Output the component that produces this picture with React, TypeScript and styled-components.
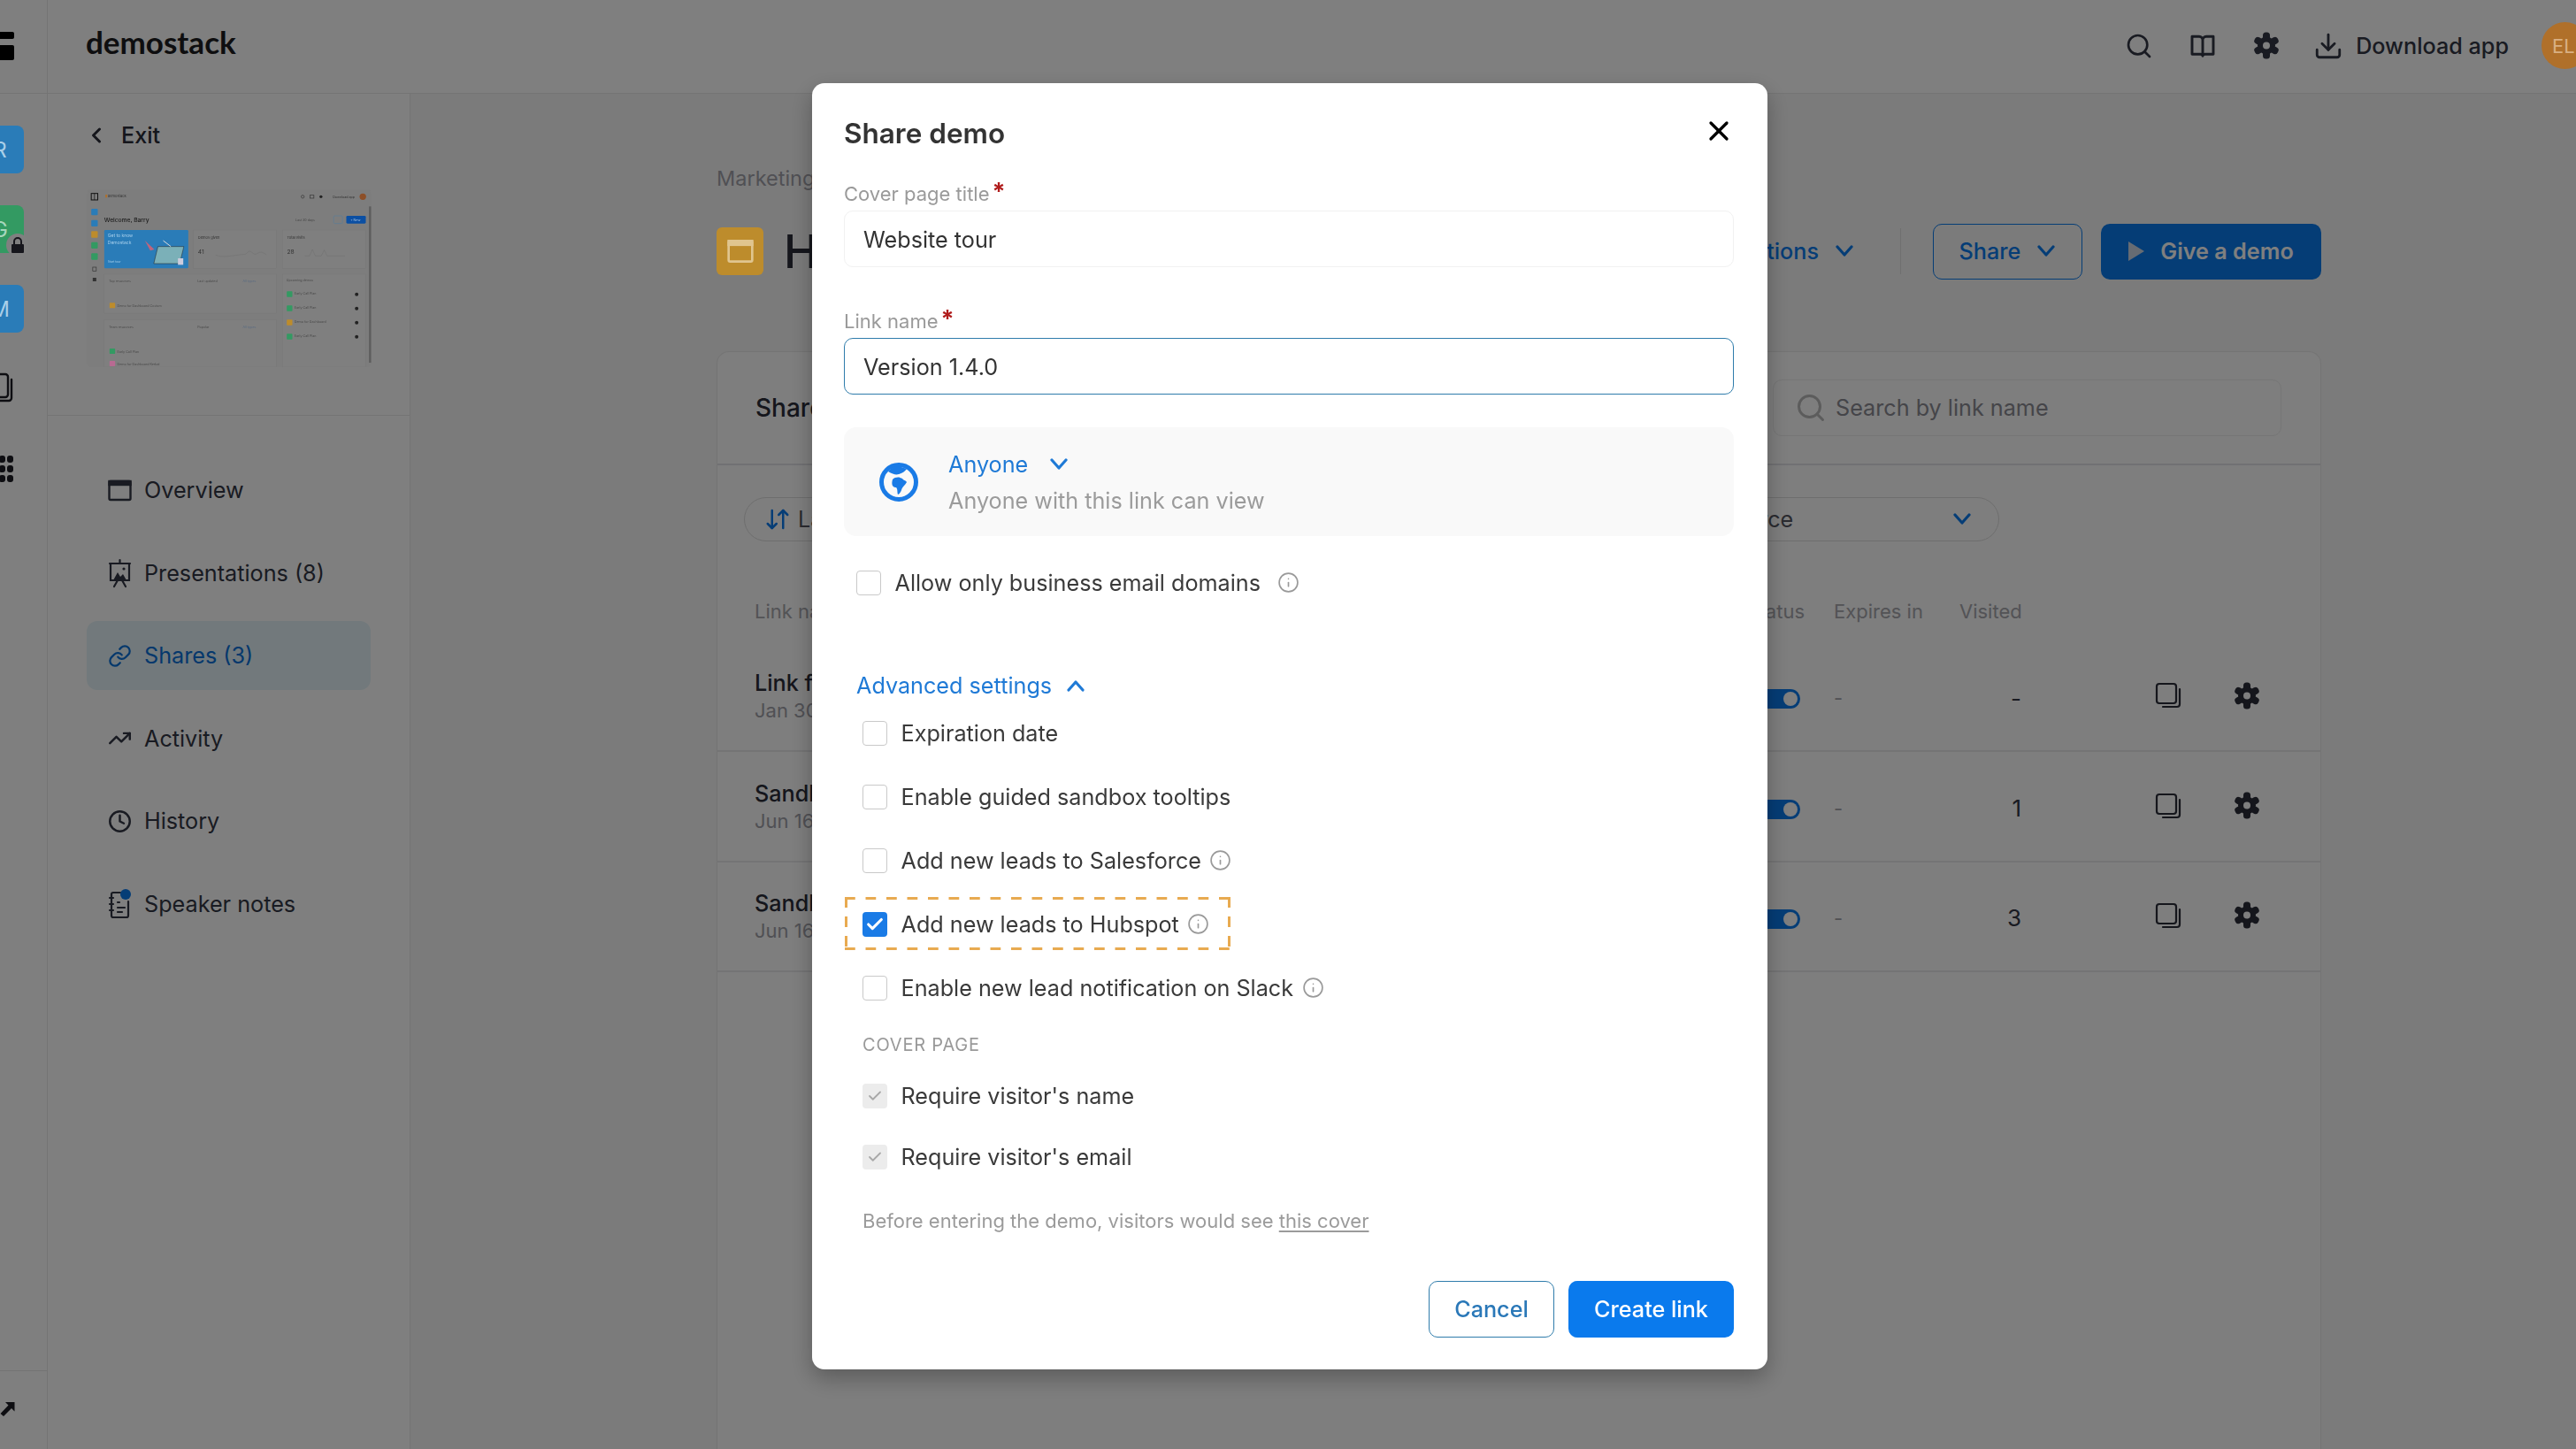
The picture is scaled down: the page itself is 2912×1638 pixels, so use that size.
import React from "react";
import styled, { createGlobalStyle } from "styled-components";
import { Search, Download, Link, TrendingUp, Clock, ArrowDownUp, Info, X, ChevronLeft, Check } from "lucide-react";

const GlobalStyle = createGlobalStyle`
  * { box-sizing: border-box; }
  html, body { margin: 0; padding: 0; height: 100%; background: #fff; }
  body { font-family: Inter, "Liberation Sans", sans-serif; color: #333644; overflow: hidden; }
`;

const Shell = styled.div`
  display: flex;
  width: 100vw;
  height: 100vh;
  overflow: hidden;
  background: #fff;
`;

const Rail = styled.aside`
  width: 54px;
  flex-shrink: 0;
  display: flex;
  flex-direction: column;
  border-right: 1px solid #e8e8e8;
  overflow: hidden;
`;

const RailTop = styled.div`
  height: 106px;
  flex-shrink: 0;
  padding-top: 36px;
  border-bottom: 1px solid #e8e8e8;
  display: flex;
  flex-direction: column;
  gap: 7px;
`;

const RailBar = styled.span<{ $h: number }>`
  display: block;
  width: 16px;
  height: ${({ $h }) => $h}px;
  background: #000;
  border-radius: 0 2px 2px 0;
`;

const RailList = styled.div`
  flex: 1;
  display: flex;
  flex-direction: column;
  align-items: flex-end;
  padding: 36px 26px 0 0;
  gap: 36px;
`;

const Tile = styled.div<{ $bg: string; $ink: string }>`
  position: relative;
  z-index: 20;
  width: 54px;
  height: 54px;
  flex-shrink: 0;
  border-radius: 8px;
  background: ${({ $bg }) => $bg};
  color: ${({ $ink }) => $ink};
  font-size: 24px;
  display: flex;
  align-items: center;
  justify-content: center;
`;

const LockBadge = styled.span`
  position: absolute;
  right: -6px;
  bottom: -4px;
  width: 26px;
  height: 26px;
  border-radius: 50%;
  background: #808080;
  display: flex;
  align-items: center;
  justify-content: center;
`;

const RailIcon = styled.svg<{ $top: number }>`
  width: 30px;
  height: 34px;
  margin-right: 12px;
  margin-top: ${({ $top }) => $top}px;
  flex-shrink: 0;
  color: #1c1c24;
`;

const RailFoot = styled.div`
  height: 89px;
  flex-shrink: 0;
  border-top: 1px solid #e8e8e8;
  padding-top: 34px;

  svg {
    display: block;
  }
`;

const Column = styled.div`
  flex: 1;
  min-width: 0;
  display: flex;
  flex-direction: column;
`;

const TopBar = styled.header`
  height: 106px;
  flex-shrink: 0;
  display: flex;
  align-items: center;
  justify-content: space-between;
  padding-left: 43px;
  border-bottom: 1px solid #e8e8e8;
`;

const Logo = styled.div`
  font-family: Lato, Inter, sans-serif;
  font-size: 35px;
  font-weight: 700;
  color: #1c1c20;
  margin-top: -12px;
`;

const TopActions = styled.div`
  display: flex;
  align-items: center;
  margin-right: -14px;
  margin-top: -2px;
  color: #333644;
`;

const TopIcon = styled.span`
  width: 32px;
  height: 36px;
  margin-right: 40px;
  display: flex;
  align-items: center;
  justify-content: center;
`;

const DownloadLabel = styled.span`
  display: flex;
  align-items: center;
  gap: 14px;
  font-size: 25.2px;
  font-weight: 500;
  margin-left: -3px;
`;

const Avatar = styled.div`
  position: relative;
  z-index: 20;
  width: 53px;
  height: 53px;
  margin-left: 37px;
  border-radius: 50%;
  background: #b0702a;
  color: #d9b083;
  font-size: 22px;
  display: flex;
  align-items: center;
  padding-left: 12px;
`;

const Body = styled.div`
  flex: 1;
  min-height: 0;
  display: flex;
`;

const Sidebar = styled.nav`
  width: 410px;
  flex-shrink: 0;
  border-right: 1px solid #e8e8e8;
`;

const SideTop = styled.div`
  height: 364px;
  padding: 32px 44px 0;
  border-bottom: 1px solid #e8e8e8;
`;

const ExitLink = styled.div`
  display: flex;
  align-items: center;
  gap: 14px;
  height: 30px;
  margin-left: -3px;
  font-size: 25.2px;
  font-weight: 500;
  color: #2a2c38;
`;

const Thumb = styled.svg`
  position: relative;
  z-index: 20;
  display: block;
  width: 322px;
  height: 201px;
  margin-top: 46px;
`;

const NavList = styled.div`
  display: flex;
  flex-direction: column;
  gap: 15.6px;
  padding: 45px 44px 0;
`;

const NavItem = styled.div<{ $active?: boolean }>`
  height: 78px;
  display: flex;
  align-items: center;
  gap: 14px;
  padding-left: 24px;
  border-radius: 12px;
  font-size: 25.2px;
  color: ${({ $active }) => ($active ? "#0a70d8" : "#333644")};
  background: ${({ $active }) => ($active ? "#e4f3f8" : "transparent")};
`;

const NavIcon = styled.svg`
  width: 27px;
  height: 34px;
  flex-shrink: 0;
`;

const Main = styled.main`
  flex: 1;
  min-width: 0;
  background: #f7f7f7;
  padding: 78px 288px 0 346px;
  display: flex;
  flex-direction: column;
`;

const Crumb = styled.div`
  height: 36px;
  font-size: 23.5px;
  line-height: 36px;
  color: #a0a0a8;
`;

const TitleRow = styled.div`
  margin-top: 32px;
  height: 64px;
  display: flex;
  align-items: center;
  justify-content: space-between;
`;

const TitleLeft = styled.div`
  display: flex;
  align-items: center;
  gap: 23px;
`;

const AmberTile = styled.div`
  position: relative;
  z-index: 20;
  width: 53px;
  height: 54px;
  border-radius: 6px;
  background: #bd8c2c;
  display: flex;
  align-items: center;
  justify-content: center;
  color: #e0c58f;
`;

const PageTitle = styled.h1`
  margin: 0;
  font-size: 52px;
  font-weight: 500;
  color: #2a2c38;
`;

const TitleActions = styled.div`
  display: flex;
  align-items: center;
`;

const TextAction = styled.span`
  display: flex;
  align-items: center;
  gap: 18px;
  font-size: 25.2px;
  font-weight: 500;
  color: #0a7aed;
`;

const Divider = styled.span`
  width: 1px;
  height: 52px;
  margin: 0 36px 0 52px;
  background: #e0e0e0;
`;

const OutlineBtn = styled.span`
  height: 63px;
  width: 169px;
  display: flex;
  align-items: center;
  justify-content: center;
  gap: 18px;
  border: 1.5px solid #0a7aed;
  border-radius: 10px;
  font-size: 25.2px;
  font-weight: 500;
  color: #0a7aed;
`;

const SolidBtn = styled.span`
  height: 63px;
  width: 249px;
  margin-left: 21px;
  display: flex;
  align-items: center;
  justify-content: center;
  gap: 18px;
  background: #0a7aed;
  border-radius: 10px;
  font-size: 25.2px;
  font-weight: 600;
  color: #fff;
`;

const Card = styled.section`
  margin-top: 81px;
  flex: 1;
  background: #fcfcfc;
  border: 1px solid #e8e8e8;
  border-bottom: none;
  border-radius: 14px 14px 0 0;
`;

const CardHead = styled.div`
  height: 128px;
  display: flex;
  align-items: center;
  justify-content: space-between;
  padding: 0 44px 0 43px;
  border-bottom: 2px solid #e2e2e6;
`;

const CardTitle = styled.div`
  font-size: 28px;
  font-weight: 500;
  color: #2a2c38;
`;

const SearchBox = styled.div`
  width: 575px;
  height: 64px;
  display: flex;
  align-items: center;
  gap: 10px;
  padding-left: 24px;
  border: 1px solid #ececec;
  border-radius: 10px;
  font-size: 25.2px;
  color: #8a8a92;
`;

const FilterRow = styled.div`
  display: flex;
  justify-content: space-between;
  padding: 36px 363px 0 30px;
`;

const Pill = styled.div`
  width: 340px;
  height: 50px;
  display: flex;
  align-items: center;
  justify-content: space-between;
  padding: 0 30px 0 22px;
  border: 1px solid #dcdcdc;
  border-radius: 25px;
  font-size: 25.2px;
  color: #55565f;
`;

const PillLead = styled.span`
  display: flex;
  align-items: center;
  gap: 8px;
`;

const Grid = styled.div`
  display: grid;
  grid-template-columns: 1137px 83px 142px 70px 1fr;
  align-items: center;
  padding-left: 42px;
`;

const HeadRow = styled(Grid)`
  height: 30px;
  margin-top: 64px;
  margin-bottom: 20px;
  font-size: 22px;
  color: #a6a6ac;
`;

const RightCell = styled.span`
  justify-self: end;
  margin-right: 33px;
`;

const Row = styled(Grid)`
  height: 124.4px;
  border-bottom: 2px solid #e8e8ea;
`;

const RowName = styled.div`
  font-size: 25.2px;
  line-height: 32px;
  font-weight: 500;
  color: #2a2c38;
`;

const RowDate = styled.div`
  font-size: 22px;
  line-height: 30px;
  color: #a0a0a8;
`;

const Toggle = styled.span`
  justify-self: end;
  position: relative;
  width: 60px;
  height: 22px;
  margin: 6px 38px 0 0;
  border-radius: 11px;
  background: #0a7aed;

  &::after {
    content: "";
    position: absolute;
    right: 3px;
    top: 3px;
    width: 16px;
    height: 16px;
    border-radius: 50%;
    background: #fff;
  }
`;

const Dash = styled.span`
  margin-top: 4px;
  font-size: 22px;
  color: #a0a0a8;
`;

const Visits = styled.span`
  justify-self: end;
  font-size: 26px;
  color: #333644;
  margin-top: 4px;
`;

const RowIcons = styled.div`
  display: flex;
  align-items: center;
  gap: 59px;
  padding-left: 151px;
  margin-top: -2px;
  color: #2a2c38;
`;

const Overlay = styled.div`
  position: fixed;
  inset: 0;
  z-index: 10;
  background: rgba(0, 0, 0, 0.5);
  display: flex;
  justify-content: center;
  align-items: flex-start;
  padding: 94px 0 0 4px;
`;

const Modal = styled.div`
  position: relative;
  width: 1080px;
  height: 1454px;
  padding: 37px 38px 36px 36px;
  background: #fff;
  border-radius: 14px;
  box-shadow: 0 10px 26px rgba(0, 0, 0, 0.28);
  display: flex;
  flex-direction: column;
`;

const ModalTitle = styled.h2`
  margin: 0;
  font-size: 31.5px;
  line-height: 40px;
  font-weight: 600;
  color: #333;
`;

const CloseBtn = styled.span`
  position: absolute;
  top: 36px;
  right: 37px;
  display: flex;
  color: #000;
`;

const FieldLabel = styled.div<{ $gap: number }>`
  display: flex;
  height: 30px;
  margin-top: ${({ $gap }) => $gap}px;
  margin-bottom: 4px;
  font-size: 22px;
  line-height: 30px;
  color: #9a9a9a;
`;

const Required = styled.span`
  margin-left: 3px;
  margin-top: -2px;
  font-size: 27px;
  font-weight: 700;
  color: #b01c1c;
`;

const TextField = styled.div<{ $focused?: boolean }>`
  height: 64px;
  display: flex;
  align-items: center;
  padding: 1px 0 0 21px;
  border: ${({ $focused }) => ($focused ? "1.5px solid #2f7cab" : "1px solid #f1f1f1")};
  border-radius: 10px;
  font-size: 25.2px;
  color: #333;
`;

const AccessPanel = styled.div`
  height: 123px;
  margin-top: 37px;
  display: flex;
  align-items: center;
  gap: 34px;
  padding-left: 40px;
  background: #f9f9f9;
  border-radius: 14px;
`;

const AccessText = styled.div`
  display: flex;
  flex-direction: column;
  gap: 5px;
  margin-top: 2px;
`;

const AccessPick = styled.div`
  display: flex;
  align-items: center;
  gap: 24px;
  height: 36px;
  font-size: 25.2px;
  color: #1f7ad6;
`;

const AccessNote = styled.div`
  height: 36px;
  font-size: 25.2px;
  line-height: 36px;
  color: #9b9b9b;
`;

const CheckRow = styled.div<{ $indent: number; $top: number; $highlight?: boolean }>`
  position: relative;
  align-self: flex-start;
  display: flex;
  align-items: center;
  gap: 15.5px;
  height: 28px;
  margin-left: ${({ $indent }) => $indent}px;
  margin-top: ${({ $top }) => $top}px;
  font-size: 25.2px;
  color: #3a3a3a;

  ${({ $highlight }) =>
    $highlight &&
    `&::before {
      content: "";
      position: absolute;
      left: -20px;
      right: -24px;
      top: -17px;
      bottom: -15px;
      background:
        linear-gradient(90deg, #e8aa50 12px, transparent 12px) repeat-x left top / 23.5px 3px,
        linear-gradient(90deg, #e8aa50 12px, transparent 12px) repeat-x left bottom / 23.5px 3px,
        linear-gradient(180deg, #e8aa50 12px, transparent 12px) repeat-y left top / 3px 22px,
        linear-gradient(180deg, #e8aa50 12px, transparent 12px) repeat-y right top / 3px 22px;
    }`}
`;

const Box = styled.span<{ $state?: "on" | "locked" }>`
  width: 28px;
  height: 28px;
  flex-shrink: 0;
  display: flex;
  align-items: center;
  justify-content: center;
  border-radius: 4px;
  border: ${({ $state }) => ($state ? "none" : "1px solid #c9c9c9")};
  background: ${({ $state }) => ($state === "on" ? "#1a7be6" : $state === "locked" ? "#ececec" : "#fff")};
  color: ${({ $state }) => ($state === "on" ? "#fff" : "#a8a8a8")};
`;

const InfoMark = styled.span<{ $gap: number }>`
  display: flex;
  margin-left: ${({ $gap }) => $gap}px;
  margin-top: -2px;
  color: #9a9a9a;
`;

const AdvancedToggle = styled.div`
  display: flex;
  align-items: center;
  gap: 16px;
  height: 34px;
  margin: 85px 0 0 14px;
  font-size: 25.2px;
  color: #1f7ad6;
`;

const SectionCaption = styled.div`
  height: 28px;
  margin: 36px 0 0 21px;
  font-size: 20px;
  line-height: 28px;
  letter-spacing: 0.8px;
  color: #999;
`;

const FootNote = styled.div`
  height: 30px;
  margin: 43px 0 0 21px;
  font-size: 22px;
  line-height: 30px;
  color: #9b9b9b;

  u {
    text-underline-offset: 3px;
  }
`;

const ModalActions = styled.div`
  display: flex;
  justify-content: flex-end;
  gap: 16px;
  margin-top: 53px;
`;

const CancelBtn = styled.span`
  width: 142px;
  height: 64px;
  display: flex;
  align-items: center;
  justify-content: center;
  border: 1.5px solid #2f7cab;
  border-radius: 10px;
  font-size: 25.2px;
  font-weight: 500;
  color: #2a78b8;
`;

const CreateBtn = styled.span`
  width: 187px;
  height: 64px;
  display: flex;
  align-items: center;
  justify-content: center;
  background: #0a7aed;
  border-radius: 10px;
  font-size: 25.2px;
  font-weight: 500;
  color: #fff;
`;

function Chevron({ up, color = "currentColor" }: { up?: boolean; color?: string }) {
  return (
    <svg width="22" height="14" viewBox="0 0 22 14" fill="none" stroke={color} strokeWidth="3.2" strokeLinecap="round" strokeLinejoin="round">
      <path d={up ? "M3 12 L11 3 L19 12" : "M3 2 L11 11 L19 2"} />
    </svg>
  );
}

function Gear({ hole = "#fff" }: { hole?: string }) {
  return (
    <svg width="30" height="31" viewBox="0 0 30 31" fill="currentColor">
      <circle cx="15" cy="15.5" r="10" />
      {[0, 60, 120, 180, 240, 300].map((deg) => (
        <rect key={deg} x="11" y="0.5" width="8" height="9" rx="3.5" transform={`rotate(${deg} 15 15.5)`} />
      ))}
      <circle cx="15" cy="15.5" r="4" fill={hole} />
    </svg>
  );
}

function CopyIcon() {
  return (
    <svg width="30" height="30" viewBox="0 0 30 30" fill="none" stroke="currentColor" strokeWidth="2.2" strokeLinecap="round">
      <rect x="2" y="2" width="22" height="22" rx="3" />
      <path d="M28 8v17a3 3 0 0 1-3 3H9" />
    </svg>
  );
}

function BookIcon() {
  return (
    <svg width="32" height="32" viewBox="0 0 24 24" fill="none" stroke="currentColor" strokeWidth="2.2" strokeLinejoin="round">
      <path d="M12 7c0-1.7-1.2-3-3-3H3v15h7c1.2 0 2 .7 2 1.5 0-.8.8-1.5 2-1.5h7V4h-6c-1.8 0-3 1.3-3 3zM12 7v13" />
    </svg>
  );
}

function WindowIcon({ size = 27 }: { size?: number }) {
  return (
    <svg width={size} height={size} viewBox="0 0 27 27" fill="none" stroke="currentColor" strokeWidth="2.4">
      <rect x="1.5" y="3" width="24" height="21" rx="1.5" />
      <rect x="1.5" y="3" width="24" height="4" fill="currentColor" />
    </svg>
  );
}

function EaselIcon() {
  return (
    <NavIcon viewBox="0 0 27 34" fill="none" stroke="currentColor" strokeWidth="2.2" strokeLinecap="round">
      <path d="M13.5 2v4M2 6h23M3 6v19h21V6M7 32l4-7M20 32l-4-7" />
      <path d="M6 25l5-9 3 5 3-3 4 7z" fill="currentColor" stroke="none" />
      <circle cx="18" cy="12" r="1.6" fill="currentColor" stroke="none" />
    </NavIcon>
  );
}

function NotesIcon() {
  return (
    <NavIcon viewBox="0 0 27 34" fill="none" stroke="currentColor" strokeWidth="2.2" strokeLinecap="round">
      <path d="M14 4H6a2 2 0 0 0-2 2v24a2 2 0 0 0 2 2h15a2 2 0 0 0 2-2V14" />
      <path d="M2 10h4M2 17h4M2 24h4M11 15h2M11 21h8M11 26h5" />
      <circle cx="20" cy="6" r="6" fill="#0a7aed" stroke="none" />
    </NavIcon>
  );
}

function GlobeIcon() {
  return (
    <svg width="44" height="44" viewBox="0 0 44 44" fill="none">
      <circle cx="22" cy="22" r="19.5" stroke="#1a7be6" strokeWidth="5" />
      <path d="M10 10c5 3 9 4 12 3 4-1 7-3 9-6l-9-3c-5 0-9 2-12 6z" fill="#1a7be6" />
      <path d="M15 19c3-3 8-3 11-1 1 2 4 2 5 4-2 4-5 5-6 9-1 3-3 5-4 5-1-3 0-6-2-8-3 0-6-2-4-9z" fill="#1a7be6" />
    </svg>
  );
}

function Thumbnail() {
  const tableText = "#4a4a4a";
  return (
    <Thumb viewBox="22 42 963 603" fontFamily="Inter, sans-serif">
      <rect x="22" y="42" width="963" height="603" rx="14" fill="#7d7d7d" />
      <rect x="978" y="100" width="7" height="530" fill="#5d5d5d" />
      <rect x="36" y="56" width="22" height="22" fill="none" stroke="#111" strokeWidth="3" />
      <rect x="46" y="56" width="2" height="22" fill="#111" />
      <rect x="84" y="60" width="6" height="10" fill="#b0702a" />
      <text x="92" y="70" fontSize="12" fill="#333">demostack</text>
      <circle cx="753" cy="67" r="5" fill="none" stroke="#333" strokeWidth="2" />
      <rect x="778" y="62" width="13" height="10" fill="none" stroke="#333" strokeWidth="2" />
      <circle cx="815" cy="67" r="5" fill="#222" />
      <text x="855" y="71" fontSize="11" fill="#333">Download app</text>
      <circle cx="957" cy="67" r="11" fill="#8d4f28" />

      <rect x="36" y="108" width="22" height="22" rx="3" fill="#2a7cb8" />
      <rect x="36" y="146" width="22" height="22" rx="3" fill="#2a7cb8" />
      <rect x="36" y="184" width="22" height="22" rx="3" fill="#bd8c2c" />
      <rect x="36" y="221" width="22" height="22" rx="3" fill="#339a62" />
      <rect x="36" y="259" width="22" height="22" rx="3" fill="#339a62" />
      <rect x="41" y="306" width="12" height="13" fill="none" stroke="#333" strokeWidth="2" />
      <rect x="41" y="342" width="12" height="12" fill="#333" />

      <text x="80" y="152" fontSize="20" fontWeight="500" fill="#1c1c1c">Welcome, Barry</text>
      <text x="728" y="149" fontSize="11" fill="#444">Last 30 days</text>
      <rect x="858" y="132" width="30" height="26" rx="4" fill="none" stroke="#4f7da3" strokeWidth="1.5" />
      <rect x="901" y="132" width="66" height="26" rx="4" fill="#0b4fa3" />
      <text x="915" y="149" fontSize="11" fill="#a9c3e0">+ New</text>

      <rect x="80" y="180" width="285" height="130" rx="4" fill="#2a7cb8" />
      <text x="92" y="205" fontSize="15" fill="#a8d0ec">Get to know</text>
      <text x="92" y="228" fontSize="15" fill="#a8d0ec">Demostack</text>
      <text x="92" y="290" fontSize="10" fill="#a8d0ec">Start tour</text>
      <path d="M262 236h88l-14 58h-88z" fill="#7bb0b8" stroke="#222" strokeWidth="1.5" />
      <path d="M218 216l32 30-14 4z" fill="#c0647c" />
      <path d="M280 216l26 20" stroke="#ddd" strokeWidth="3" />
      <rect x="330" y="276" width="18" height="22" fill="#ccd" />

      <rect x="382" y="180" width="282" height="130" fill="#7f7f7f" stroke="#757575" />
      <text x="398" y="210" fontSize="12" fill="#333">Demos given</text>
      <text x="398" y="262" fontSize="20" fill="#333">41</text>
      <path d="M458 265c20 8 40 4 60 2s20-4 34-4 14-14 24-10 10 14 24 6 16-2 30 4" fill="none" stroke="#666" />
      <rect x="684" y="180" width="282" height="130" fill="#7f7f7f" stroke="#757575" />
      <text x="700" y="210" fontSize="12" fill="#333">Total visits</text>
      <text x="700" y="262" fontSize="20" fill="#333">28</text>
      <path d="M760 268h16l10-22 10 22h20l10-20 10 20h60" fill="none" stroke="#666" />

      <rect x="80" y="330" width="584" height="132" fill="#7f7f7f" stroke="#757575" />
      <text x="96" y="356" fontSize="11" fill={tableText}>Top resources</text>
      <text x="396" y="356" fontSize="11" fill={tableText}>Last updated</text>
      <text x="550" y="356" fontSize="11" fill="#5a6a80">All types</text>
      <rect x="98" y="427" width="19" height="18" rx="2" fill="#bd8c2c" />
      <text x="124" y="440" fontSize="11" fill={tableText}>Demo for Dashboard Custom</text>

      <rect x="80" y="484" width="584" height="161" fill="#7f7f7f" stroke="#757575" />
      <text x="96" y="512" fontSize="11" fill={tableText}>Team resources</text>
      <text x="396" y="512" fontSize="11" fill={tableText}>Popular</text>
      <text x="550" y="512" fontSize="11" fill="#5a6a80">All types</text>
      <rect x="98" y="582" width="19" height="18" rx="2" fill="#339a62" />
      <text x="124" y="596" fontSize="11" fill={tableText}>Early Call Plan</text>
      <rect x="98" y="624" width="19" height="18" rx="2" fill="#b86a92" />
      <text x="124" y="638" fontSize="11" fill={tableText}>Demo for Dashboard Kerbal</text>

      <rect x="684" y="330" width="282" height="315" fill="#7f7f7f" stroke="#757575" />
      <text x="698" y="355" fontSize="11" fill={tableText}>Upcoming demos</text>
      {[
        { y: 388, fill: "#339a62", label: "Early Call Plan" },
        { y: 436, fill: "#339a62", label: "Early Call Plan" },
        { y: 484, fill: "#bd8c2c", label: "Demo for Dashboard" },
        { y: 532, fill: "#339a62", label: "Early Call Plan" },
      ].map((item) => (
        <g key={item.y}>
          <rect x="699" y={item.y} width="19" height="19" rx="2" fill={item.fill} />
          <text x="725" y={item.y + 12} fontSize="11" fill={tableText}>{item.label}</text>
          <circle cx="936" cy={item.y + 10} r="6" fill="#222" />
        </g>
      ))}
    </Thumb>
  );
}

const rows = [
  { name: "Link for website", date: "Jan 30", visits: "-" },
  { name: "Sandbox", date: "Jun 16", visits: "1" },
  { name: "Sandbox", date: "Jun 16", visits: "3" },
];

export default function App() {
  return (
    <>
      <GlobalStyle />
      <Shell>
        <Rail>
          <RailTop>
            <RailBar $h={8} />
            <RailBar $h={17} />
          </RailTop>
          <RailList>
            <Tile $bg="#2a7cb8" $ink="#a9cfe8">R</Tile>
            <Tile $bg="#339a62" $ink="#a6d6bc">
              G
              <LockBadge>
                <svg width="14" height="18" viewBox="0 0 14 18" fill="#16161c">
                  <path d="M2 8V5a5 5 0 0 1 10 0v3h1a1 1 0 0 1 1 1v8a1 1 0 0 1-1 1H1a1 1 0 0 1-1-1V9a1 1 0 0 1 1-1h1zm2 0h6V5a3 3 0 0 0-6 0v3z" />
                </svg>
              </LockBadge>
            </Tile>
            <Tile $bg="#2a7cb8" $ink="#a9cfe8">M</Tile>
            <RailIcon $top={9} viewBox="0 0 30 34" fill="none" stroke="currentColor" strokeWidth="2.4">
              <rect x="2" y="2" width="22" height="26" rx="3" />
              <path d="M28 8v21a3 3 0 0 1-3 3H8" strokeLinecap="round" />
            </RailIcon>
            <RailIcon $top={20} viewBox="0 0 30 34" fill="currentColor">
              {[4, 15, 26].map((y) => (
                <g key={y}>
                  <rect x="14" y={y} width="7" height="8" rx="3" />
                  <rect x="23" y={y} width="7" height="8" rx="3" />
                </g>
              ))}
            </RailIcon>
          </RailList>
          <RailFoot>
            <svg width="17" height="17" viewBox="0 0 17 17" fill="#1c1c24">
              <path d="M6 1h10.5v10.5L13 8l-9 9-3.5-3L9.5 4.5z" />
            </svg>
          </RailFoot>
        </Rail>
        <Column>
          <TopBar>
            <Logo>demostack</Logo>
            <TopActions>
              <TopIcon><Search size={34} strokeWidth={2} /></TopIcon>
              <TopIcon><BookIcon /></TopIcon>
              <TopIcon><Gear /></TopIcon>
              <DownloadLabel><Download size={34} strokeWidth={2} />Download app</DownloadLabel>
              <Avatar>EL</Avatar>
            </TopActions>
          </TopBar>
          <Body>
            <Sidebar>
              <SideTop>
                <ExitLink><ChevronLeft size={28} strokeWidth={2.6} />Exit</ExitLink>
                <Thumbnail />
              </SideTop>
              <NavList>
                <NavItem><WindowIcon />Overview</NavItem>
                <NavItem><EaselIcon />Presentations (8)</NavItem>
                <NavItem $active><Link size={27} strokeWidth={2} />Shares (3)</NavItem>
                <NavItem><TrendingUp size={27} strokeWidth={2.2} />Activity</NavItem>
                <NavItem><Clock size={27} strokeWidth={2.2} />History</NavItem>
                <NavItem><NotesIcon />Speaker notes</NavItem>
              </NavList>
            </Sidebar>
            <Main>
              <Crumb>Marketing</Crumb>
              <TitleRow>
                <TitleLeft>
                  <AmberTile><WindowIcon size={30} /></AmberTile>
                  <PageTitle>Homepage</PageTitle>
                </TitleLeft>
                <TitleActions>
                  <TextAction>Options<Chevron /></TextAction>
                  <Divider />
                  <OutlineBtn>Share<Chevron /></OutlineBtn>
                  <SolidBtn>
                    <svg width="18" height="22" viewBox="0 0 18 22" fill="#cfd8e6"><path d="M0 0l18 11L0 22z" /></svg>
                    Give a demo
                  </SolidBtn>
                </TitleActions>
              </TitleRow>
              <Card>
                <CardHead>
                  <CardTitle>Shares</CardTitle>
                  <SearchBox><Search size={36} strokeWidth={2} color="#b8b8b8" />Search by link name</SearchBox>
                </CardHead>
                <FilterRow>
                  <Pill><PillLead><ArrowDownUp size={30} color="#0a7aed" strokeWidth={2} />Latest</PillLead></Pill>
                  <Pill>Source<Chevron color="#0a7aed" /></Pill>
                </FilterRow>
                <HeadRow>
                  <span>Link name</span>
                  <RightCell>Status</RightCell>
                  <span>Expires in</span>
                  <span>Visited</span>
                </HeadRow>
                {rows.map((row, i) => (
                  <Row key={i}>
                    <div>
                      <RowName>{row.name}</RowName>
                      <RowDate>{row.date}</RowDate>
                    </div>
                    <Toggle />
                    <Dash>-</Dash>
                    <Visits>{row.visits}</Visits>
                    <RowIcons>
                      <CopyIcon />
                      <Gear hole="#fcfcfc" />
                    </RowIcons>
                  </Row>
                ))}
              </Card>
            </Main>
          </Body>
        </Column>
      </Shell>
      <Overlay>
        <Modal>
          <ModalTitle>Share demo</ModalTitle>
          <CloseBtn><X size={36} strokeWidth={2.2} /></CloseBtn>
          <FieldLabel $gap={33}>Cover page title<Required>*</Required></FieldLabel>
          <TextField>Website tour</TextField>
          <FieldLabel $gap={46}>Link name<Required>*</Required></FieldLabel>
          <TextField $focused>Version 1.4.0</TextField>
          <AccessPanel>
            <GlobeIcon />
            <AccessText>
              <AccessPick>Anyone<Chevron /></AccessPick>
              <AccessNote>Anyone with this link can view</AccessNote>
            </AccessText>
          </AccessPanel>
          <CheckRow $indent={14} $top={39}>
            <Box />Allow only business email domains
            <InfoMark $gap={3}><Info size={25} strokeWidth={1.6} /></InfoMark>
          </CheckRow>
          <AdvancedToggle>Advanced settings<Chevron up /></AdvancedToggle>
          <CheckRow $indent={21} $top={23}><Box />Expiration date</CheckRow>
          <CheckRow $indent={21} $top={44}><Box />Enable guided sandbox tooltips</CheckRow>
          <CheckRow $indent={21} $top={44}>
            <Box />Add new leads to Salesforce
            <InfoMark $gap={-6}><Info size={25} strokeWidth={1.6} /></InfoMark>
          </CheckRow>
          <CheckRow $indent={21} $top={44} $highlight>
            <Box $state="on"><Check size={22} strokeWidth={3.4} /></Box>Add new leads to Hubspot
            <InfoMark $gap={-6}><Info size={25} strokeWidth={1.6} /></InfoMark>
          </CheckRow>
          <CheckRow $indent={21} $top={44}>
            <Box />Enable new lead notification on Slack
            <InfoMark $gap={-6}><Info size={25} strokeWidth={1.6} /></InfoMark>
          </CheckRow>
          <SectionCaption>COVER PAGE</SectionCaption>
          <CheckRow $indent={21} $top={30}><Box $state="locked"><Check size={18} strokeWidth={2.4} /></Box>Require visitor's name</CheckRow>
          <CheckRow $indent={21} $top={41}><Box $state="locked"><Check size={18} strokeWidth={2.4} /></Box>Require visitor's email</CheckRow>
          <FootNote>Before entering the demo, visitors would see <u>this cover</u></FootNote>
          <ModalActions>
            <CancelBtn>Cancel</CancelBtn>
            <CreateBtn>Create link</CreateBtn>
          </ModalActions>
        </Modal>
      </Overlay>
    </>
  );
}
